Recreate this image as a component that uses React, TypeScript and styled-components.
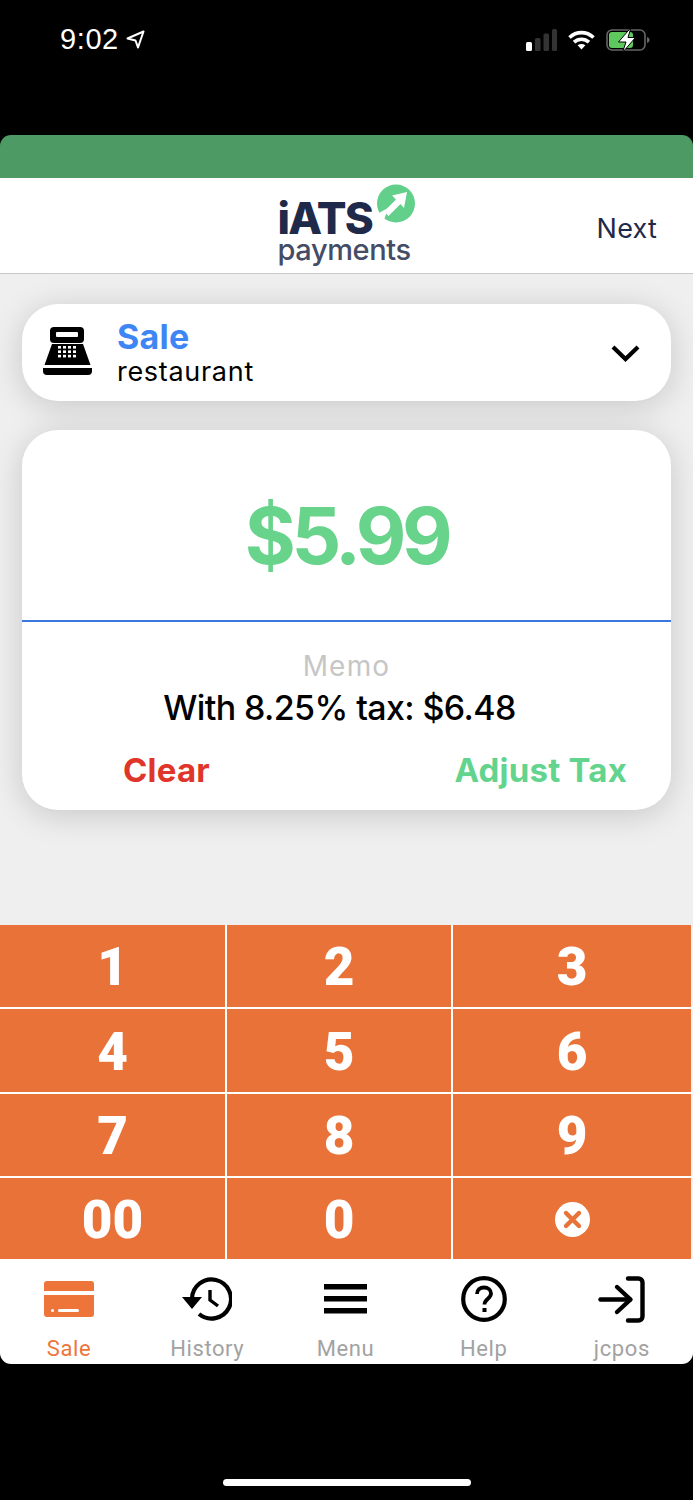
import { Fragment } from 'react';
import styled, { createGlobalStyle } from 'styled-components';

const Global = createGlobalStyle`
  html, body { margin: 0; padding: 0; background: #000; }
  * { box-sizing: border-box; }
`;

const Screen = styled.div`
  width: 693px;
  height: 1500px;
  background: #000;
  display: flex;
  flex-direction: column;
  overflow: hidden;
  font-family: Inter, "Liberation Sans", sans-serif;
`;

const StatusBar = styled.div`
  height: 135px;
  flex: none;
  padding: 29px 43px 0 60px;
  display: flex;
  justify-content: space-between;
  align-items: flex-start;
  color: #fff;
`;

const StatusLeft = styled.div`
  display: flex;
  align-items: center;
  gap: 7px;
  height: 21px;
`;

const Clock = styled.span`
  font-family: "Liberation Sans", Arial, sans-serif;
  font-size: 29px;
  line-height: 21px;
  letter-spacing: 0.6px;
`;

const StatusRight = styled.div`
  display: flex;
  align-items: center;
  gap: 11px;
  height: 22px;
`;

const GreenBar = styled.div`
  height: 43px;
  flex: none;
  background: #4e9a64;
  border-radius: 11px 11px 0 0;
`;

const Header = styled.header`
  height: 96px;
  flex: none;
  background: #fff;
  border-bottom: 1px solid #c9c9c9;
  display: grid;
  grid-template-columns: 1fr auto 1fr;
`;

const Logo = styled.div`
  grid-column: 2;
  width: 137px;
  margin: 23px 1px 0 0;
  position: relative;
  display: flex;
  flex-direction: column;
`;

const LogoTop = styled.span`
  font-size: 44px;
  line-height: 34px;
  font-weight: 800;
  letter-spacing: -1.6px;
  color: #1f2a4a;
`;

const LogoBottom = styled.span`
  font-size: 29px;
  line-height: 30px;
  font-weight: 500;
  letter-spacing: -0.4px;
  color: #454c65;
`;

const LogoBadge = styled.div`
  position: absolute;
  top: -17px;
  right: 0;
  line-height: 0;
`;

const NextLink = styled.span`
  justify-self: end;
  align-self: center;
  margin: 6px 36px 0 0;
  font-size: 27px;
  letter-spacing: 0.2px;
  color: #1f2a4a;
`;

const Body = styled.main`
  height: 651px;
  flex: none;
  background: #efefef;
  padding: 30px 22px 0;
  display: flex;
  flex-direction: column;
  gap: 29px;
`;

const Card = styled.section`
  background: #fff;
  border-radius: 36px;
  box-shadow: 0 5px 32px rgba(0, 0, 0, 0.17);
`;

const TypeCard = styled(Card)`
  height: 97px;
  display: flex;
  align-items: center;
  padding: 0 31px 0 21px;
`;

const RegisterSlot = styled.div`
  margin-top: -3px;
  line-height: 0;
`;

const TypeText = styled.div`
  margin-left: 25px;
  flex: 1;
  display: flex;
  flex-direction: column;
`;

const TypeTitle = styled.span`
  font-size: 34px;
  line-height: 38px;
  font-weight: 700;
  letter-spacing: 0.3px;
  color: #3f86f5;
`;

const TypeSub = styled.span`
  font-size: 27px;
  line-height: 32px;
  letter-spacing: 0.7px;
  color: #000;
`;

const AmountCard = styled(Card)`
  height: 380px;
  display: flex;
  flex-direction: column;
`;

const AmountBox = styled.div`
  height: 192px;
  flex: none;
  padding-top: 20px;
  border-bottom: 2px solid #3a78e0;
  display: flex;
  align-items: center;
  justify-content: center;
`;

const Amount = styled.span`
  font-size: 78px;
  font-weight: 700;
  letter-spacing: -4.4px;
  color: #68d38a;
`;

const Details = styled.div`
  flex: 1;
  padding-top: 27px;
  display: flex;
  flex-direction: column;
  align-items: center;
`;

const Memo = styled.span`
  font-size: 28px;
  line-height: 34px;
  letter-spacing: 1.2px;
  color: #c6c6c6;
`;

const TaxLine = styled.span`
  margin: 3px 14px 0 0;
  font-size: 34px;
  line-height: 44px;
  font-weight: 500;
  letter-spacing: -0.6px;
  color: #000;
`;

const Actions = styled.div`
  width: 100%;
  margin-top: 18px;
  padding: 0 44px 0 101px;
  display: flex;
  justify-content: space-between;
`;

const ActionText = styled.span<{ $color: string }>`
  font-size: 33px;
  line-height: 44px;
  font-weight: 700;
  letter-spacing: 0.2px;
  color: ${(p) => p.$color};
`;

const Keypad = styled.div`
  height: 334px;
  flex: none;
  background: #fff;
  display: grid;
  grid-template-columns: 225px 224px 238px 2px;
  grid-template-rows: 82px 83px 82px 81px;
  gap: 2px;
`;

const Key = styled.div`
  padding-top: 2px;
  background: #e97238;
  color: #fff;
  font-family: Roboto, Inter, sans-serif;
  font-size: 53px;
  font-weight: 900;
  display: flex;
  align-items: center;
  justify-content: center;
`;

const KeySpacer = styled.div`
  margin-left: -2px;
  width: 2px;
  background: #f2f2f2;
`;

const Tabs = styled.nav`
  height: 105px;
  flex: none;
  padding-right: 2px;
  background: #fff;
  border-radius: 0 0 11px 11px;
  display: grid;
  grid-template-columns: repeat(5, 1fr);
`;

const Tab = styled.div`
  padding-top: 15px;
  display: flex;
  flex-direction: column;
  align-items: center;
`;

const TabIcon = styled.div`
  height: 50px;
  display: flex;
  align-items: center;
  justify-content: center;
`;

const TabLabel = styled.span<{ $active?: boolean }>`
  margin-top: 13px;
  font-family: Roboto, Inter, sans-serif;
  font-size: 22px;
  line-height: 24px;
  letter-spacing: 0.6px;
  color: ${(p) => (p.$active ? '#ee753a' : '#a2a2a2')};
`;

const Footer = styled.div`
  flex: 1;
  display: flex;
  justify-content: center;
  padding: 115px 0 0 1px;
`;

const HomeBar = styled.div`
  width: 248px;
  height: 7px;
  border-radius: 4px;
  background: #fff;
`;

function LocationIcon() {
  return (
    <svg width="19" height="19" viewBox="0 0 19 19" fill="none">
      <path d="M1.5 8.5 17.500 1.500 12 17.500 9.500 10.500Z" stroke="#fff" strokeWidth="2" strokeLinejoin="round" />
    </svg>
  );
}

function SignalIcon() {
  return (
    <svg width="31" height="22" viewBox="0 0 31 22">
      <rect x="0" y="13" width="6" height="9" rx="1.500" fill="#fff" />
      <rect x="9" y="9" width="5.500" height="13" rx="1.500" fill="#333" />
      <rect x="17.500" y="4.500" width="5.500" height="17.500" rx="1.500" fill="#333" />
      <rect x="26" y="0" width="5" height="22" rx="1.500" fill="#333" />
    </svg>
  );
}

function WifiIcon() {
  return (
    <svg width="27" height="20" viewBox="0 0 27 20" fill="none" stroke="#fff" strokeWidth="3.600">
      <path d="M1.500 7.500C8.500 1 18.500 1 25.500 7.500" />
      <path d="M6 12.200C10.500 8.200 16.500 8.200 21 12.200" />
      <path d="M13.500 19.500 9.600 15.300C11.800 13.600 15.200 13.600 17.400 15.300Z" fill="#fff" stroke="none" />
    </svg>
  );
}

function BatteryIcon() {
  return (
    <svg width="44" height="26" viewBox="0 0 44 26" fill="none">
      <rect x="1" y="3" width="38" height="20" rx="5" stroke="#666" strokeWidth="1.600" />
      <rect x="3" y="5" width="24" height="16" rx="3" fill="#5ec85f" />
      <path d="M41 10c1.800.6 2.600 1.600 2.600 3s-.8 2.400-2.600 3Z" fill="#666" />
      <path d="M25 0.500 12.500 15h7.500L16.500 25.500 29.500 10.500H22Z" fill="#fff" stroke="#000" strokeWidth="1" />
    </svg>
  );
}

function RegisterIcon() {
  const dots = [];
  for (let r = 0; r < 3; r++) {
    for (let c = 0; c < 4; c++) {
      dots.push(<rect key={`${r}-${c}`} x={15 + c * 5} y={19 + r * 4.4} width="3" height="2.600" fill="#fff" />);
    }
  }
  return (
    <svg width="49" height="48" viewBox="0 0 49 48">
      <path d="M11 0h26a4 4 0 0 1 4 4v8a4 4 0 0 1-4 4H11a4 4 0 0 1-4-4V4a4 4 0 0 1 4-4Z" fill="#000" />
      <rect x="13" y="5" width="22" height="5" rx="1" fill="#fff" />
      <path d="M9 17h31l7.500 21H1.500Z" fill="#000" />
      {dots}
      <path d="M0 41h49v3a4 4 0 0 1-4 4H4a4 4 0 0 1-4-4Z" fill="#000" />
    </svg>
  );
}

function ChevronIcon() {
  return (
    <svg width="29" height="18" viewBox="0 0 29 18" fill="none">
      <path d="M2 3 14.500 15 27 3" stroke="#000" strokeWidth="4.200" />
    </svg>
  );
}

function BadgeIcon() {
  return (
    <svg viewBox="0 0 38 39" width="38" height="39">
      <circle cx="19" cy="19.500" r="19" fill="#62d08a" />
      <path d="M0 30 11 24 7 36Z" fill="#fff" />
      <path d="M30 8 15 11.500 19 15.500 7 27.500 11.500 32 23.500 20 27 24Z" fill="#fff" />
    </svg>
  );
}

function ClearIcon() {
  return (
    <svg width="35" height="35" viewBox="0 0 35 35">
      <circle cx="17.500" cy="17.500" r="17.500" fill="#fff" />
      <path d="M11 11 24 24M24 11 11 24" stroke="#e97238" strokeWidth="4.400" strokeLinecap="round" />
    </svg>
  );
}

function CardIcon() {
  return (
    <svg width="50" height="36" viewBox="0 0 50 36">
      <path d="M3 0h44a3 3 0 0 1 3 3v7H0V3a3 3 0 0 1 3-3Z" fill="#ee753a" />
      <path d="M0 14h50v19a3 3 0 0 1-3 3H3a3 3 0 0 1-3-3Z" fill="#ee753a" />
      <rect x="7" y="28" width="3" height="3" rx="1.500" fill="#fff" />
      <rect x="14" y="28" width="21" height="3" rx="1.500" fill="#fff" />
    </svg>
  );
}

function HistoryIcon() {
  return (
    <svg width="50" height="44" viewBox="0 0 50 44" fill="none">
      <path d="M10 22A19.500 19.500 0 1 1 17 37" stroke="#000" strokeWidth="4.200" />
      <path d="M0 20h20L10 32Z" fill="#000" />
      <path d="M28 13V23L36 29" stroke="#000" strokeWidth="3.400" />
    </svg>
  );
}

function MenuIcon() {
  return (
    <svg width="43" height="30" viewBox="0 0 43 30">
      <rect y="0" width="43" height="5.500" fill="#000" />
      <rect y="12" width="43" height="5.500" fill="#000" />
      <rect y="24" width="43" height="5.500" fill="#000" />
    </svg>
  );
}

function HelpIcon() {
  return (
    <svg width="46" height="46" viewBox="0 0 46 46" fill="none">
      <circle cx="23" cy="23" r="20.800" stroke="#000" strokeWidth="4.200" />
      <path d="M16 18c0-4 3-6.500 7-6.500s7 2.500 7 6c0 5-6.500 5.500-6.500 11" stroke="#000" strokeWidth="3.800" />
      <rect x="21.500" y="32" width="4" height="4" fill="#000" />
    </svg>
  );
}

function LoginIcon() {
  return (
    <svg width="47" height="47" viewBox="0 0 47 47" fill="none" stroke="#000" strokeWidth="4.400" strokeLinecap="round" strokeLinejoin="round">
      <path d="M30 2.500H40.500A4 4 0 0 1 44.500 6.500V40.500A4 4 0 0 1 40.500 44.500H30" />
      <path d="M2.500 23.500H32" />
      <path d="M19 11 32.500 23.500 19 36" />
    </svg>
  );
}

const rows = [['1', '2', '3'], ['4', '5', '6'], ['7', '8', '9']];

const tabs = [
  { label: 'Sale', icon: <CardIcon />, active: true },
  { label: 'History', icon: <HistoryIcon /> },
  { label: 'Menu', icon: <MenuIcon /> },
  { label: 'Help', icon: <HelpIcon /> },
  { label: 'jcpos', icon: <LoginIcon /> },
];

export default function App() {
  return (
    <Screen>
      <Global />
      <StatusBar>
        <StatusLeft>
          <Clock>9:02</Clock>
          <LocationIcon />
        </StatusLeft>
        <StatusRight>
          <SignalIcon />
          <WifiIcon />
          <BatteryIcon />
        </StatusRight>
      </StatusBar>
      <GreenBar />
      <Header>
        <Logo>
          <LogoTop>iATS</LogoTop>
          <LogoBottom>payments</LogoBottom>
          <LogoBadge>
            <BadgeIcon />
          </LogoBadge>
        </Logo>
        <NextLink>Next</NextLink>
      </Header>
      <Body>
        <TypeCard>
          <RegisterSlot>
            <RegisterIcon />
          </RegisterSlot>
          <TypeText>
            <TypeTitle>Sale</TypeTitle>
            <TypeSub>restaurant</TypeSub>
          </TypeText>
          <ChevronIcon />
        </TypeCard>
        <AmountCard>
          <AmountBox>
            <Amount>$5.99</Amount>
          </AmountBox>
          <Details>
            <Memo>Memo</Memo>
            <TaxLine>With 8.25% tax: $6.48</TaxLine>
            <Actions>
              <ActionText $color="#e0352a">Clear</ActionText>
              <ActionText $color="#62d48d">Adjust Tax</ActionText>
            </Actions>
          </Details>
        </AmountCard>
      </Body>
      <Keypad>
        {rows.map((row) => (
          <Fragment key={row[0]}>
            {row.map((n) => (
              <Key key={n}>{n}</Key>
            ))}
            <KeySpacer />
          </Fragment>
        ))}
        <Key>00</Key>
        <Key>0</Key>
        <Key>
          <ClearIcon />
        </Key>
        <KeySpacer />
      </Keypad>
      <Tabs>
        {tabs.map((t) => (
          <Tab key={t.label}>
            <TabIcon>{t.icon}</TabIcon>
            <TabLabel $active={t.active}>{t.label}</TabLabel>
          </Tab>
        ))}
      </Tabs>
      <Footer>
        <HomeBar />
      </Footer>
    </Screen>
  );
}
